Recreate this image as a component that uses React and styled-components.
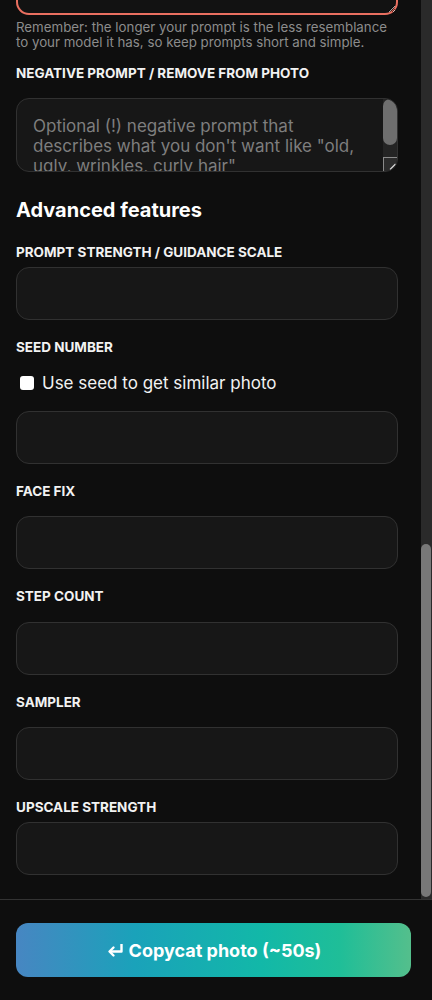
import React, { useLayoutEffect, useRef, useState } from "react";
import styled, { createGlobalStyle } from "styled-components";

// # GLOBAL
const GlobalStyle = createGlobalStyle`
	html, body {
		margin: 0;
		height: 100%;
		overflow: hidden;
		background: #0e0e0e;
	}
	* {
		box-sizing: border-box;
	}
	body {
		font-family: "Inter", "Noto Sans", sans-serif;
		color: #f2f2f2;
	}
`;

// # DATA
const fields = [
	{ id: "face", label: "FACE FIX", tall: true },
	{ id: "steps", label: "STEP COUNT", tall: true },
	{ id: "sampler", label: "SAMPLER", tall: true },
	{ id: "upscale", label: "UPSCALE STRENGTH" },
];

const ReturnIcon = () => (
	<svg width="18" height="16" viewBox="0 0 18 16" fill="none">
		<path
			d="M15.5 2 V9.5 H4"
			stroke="#fff"
			strokeWidth="2.4"
			strokeLinejoin="round"
		/>
		<path
			d="M7.5 5.5 L3.5 9.5 L7.5 13.5"
			stroke="#fff"
			strokeWidth="2.4"
			strokeLinecap="round"
			strokeLinejoin="round"
		/>
	</svg>
);

const Grip = () => (
	<svg width="12" height="12" viewBox="0 0 12 12">
		<path d="M10.5 5 L5 10.5 M10.5 8 L8 10.5" stroke="#d8d8d8" strokeWidth="1.2" />
	</svg>
);

// # MAIN COMP..
const App = () => {
	const scrollRef = useRef(null);
	const [thumb, setThumb] = useState({ top: 0, height: 0 });

	// # FUNCTIONS AND SIDE EFFECTS
	useLayoutEffect(() => {
		const el = scrollRef.current;
		if (!el) return;
		el.scrollTop = el.scrollHeight;
		const track = el.clientHeight - 4;
		const ratio = el.clientHeight / el.scrollHeight;
		setThumb({
			top: (el.scrollTop / el.scrollHeight) * track,
			height: ratio * track,
		});
	}, []);

	// # RETs
	return (
		<>
			<GlobalStyle />
			<Page>
				<Main>
					<ScrollArea ref={scrollRef}>
						<Form>
							{/* upper part of the form, scrolled out of view */}
							<Input readOnly />
							<Dropzone />
							<PhotoGrid>
								{Array.from({ length: 18 }).map((_, i) => (
									<Tile key={i} />
								))}
							</PhotoGrid>
							<PromptArea />
							<Hint>
								Remember: the longer your prompt is the less resemblance to
								your model it has, so keep prompts short and simple.
							</Hint>
							<Label $gap={15} $after={17}>
								NEGATIVE PROMPT / REMOVE FROM PHOTO
							</Label>
							<NegBox>
								<NegText placeholder='Optional (!) negative prompt that describes what you don&apos;t want like "old, ugly, wrinkles, curly hair"' />
								<NegScroll>
									<NegThumb />
									<NegTrack />
									<Resizer>
										<Grip />
									</Resizer>
								</NegScroll>
							</NegBox>

							<SubHeading>Advanced features</SubHeading>
							<Label $after={7}>PROMPT STRENGTH / GUIDANCE SCALE</Label>
							<Input readOnly />

							<Label $gap={19} $after={18}>
								SEED NUMBER
							</Label>
							<CheckRow>
								<Check type="checkbox" />
								Use seed to get similar photo
							</CheckRow>
							<Input readOnly />

							{fields.map(f => (
								<React.Fragment key={f.id}>
									<Label $gap={19} $after={f.tall ? 17.5 : 7}>
										{f.label}
									</Label>
									<Input readOnly />
								</React.Fragment>
							))}
						</Form>
					</ScrollArea>
					<ScrollTrack>
						<ScrollThumb
							style={{ marginTop: thumb.top, height: thumb.height }}
						/>
					</ScrollTrack>
				</Main>
				<BottomBar>
					<SubmitButton type="button">
						<ReturnIcon />
						Copycat photo (~50s)
					</SubmitButton>
				</BottomBar>
			</Page>
		</>
	);
};

// # STYLED COMPONENTS
const Page = styled.div`
	height: 100vh;
	display: flex;
	flex-direction: column;
	background: #0e0e0e;
`;

const Main = styled.div`
	flex: 1;
	min-height: 0;
	display: flex;
`;

const ScrollArea = styled.div`
	flex: 1;
	min-width: 0;
	overflow-y: scroll;
	scrollbar-width: none;
`;

const ScrollTrack = styled.div`
	flex: none;
	width: 11px;
	padding: 2px 1px 2px 0;
	background: #2a2a2a;
	display: flex;
	flex-direction: column;
`;

const ScrollThumb = styled.div`
	flex: none;
	width: 100%;
	border-radius: 5px;
	background: #787878;
`;

const Form = styled.div`
	display: flex;
	flex-direction: column;
	padding: 174px 23px 23.5px 16px;
`;

const SubHeading = styled.h2`
	margin: 26px 0 21.5px;
	font-size: 20px;
	line-height: 24px;
	font-weight: 700;
	color: #fff;
`;

const Label = styled.label`
	display: block;
	margin-top: ${p => p.$gap ?? 0}px;
	margin-bottom: ${p => p.$after ?? 17.5}px;
	font-size: 13.5px;
	line-height: 16px;
	font-weight: 700;
	color: #f2f2f2;
`;

const Input = styled.input`
	display: block;
	width: 100%;
	height: 53px;
	padding: 0 16px;
	border: 1px solid #313131;
	border-radius: 13px;
	background: #171717;
	color: #f2f2f2;
	font: inherit;
	outline: none;
`;

const Dropzone = styled.div`
	height: 204px;
	margin: 19px 0 16px;
	border: 1px dashed #3a3a3a;
	border-radius: 13px;
	background: #141414;
`;

const PhotoGrid = styled.div`
	display: grid;
	grid-template-columns: repeat(3, 1fr);
	gap: 8px;
	margin-bottom: 19px;
`;

const Tile = styled.div`
	aspect-ratio: 1;
	border-radius: 10px;
	background: #1c1c1c;
`;

const PromptArea = styled.textarea`
	display: block;
	width: 100%;
	height: 140px;
	padding: 16px;
	border: 2px solid #e96f60;
	border-radius: 13px;
	background: #121212;
	color: #f2f2f2;
	font: inherit;
	font-size: 17px;
	outline: none;
	resize: vertical;
`;

const Hint = styled.p`
	margin: 5px 0 0;
	font-size: 13.3px;
	line-height: 15px;
	color: #8c8c8c;
`;

const NegBox = styled.div`
	display: flex;
	height: 74px;
	border: 1px solid #313131;
	border-radius: 13px;
	background: #171717;
	overflow: hidden;
`;

const NegText = styled.textarea`
	flex: 1;
	min-width: 0;
	padding: 17px 16px 0;
	border: none;
	background: transparent;
	color: #f2f2f2;
	font-family: inherit;
	font-size: 17px;
	line-height: 20px;
	outline: none;
	resize: none;
	overflow: hidden;

	&::placeholder {
		color: #7e7e7e;
	}
`;

const NegScroll = styled.div`
	flex: none;
	width: 14px;
	display: flex;
	flex-direction: column;
	background: #242424;
`;

const NegThumb = styled.div`
	flex: none;
	height: 46px;
	border-radius: 7px;
	background: #6e6e6e;
`;

const NegTrack = styled.div`
	flex: 1;
`;

const Resizer = styled.div`
	flex: none;
	height: 14px;
	display: flex;
	align-items: flex-end;
	justify-content: flex-end;
	border-top: 1px solid #8a8a8a;
	border-left: 1px solid #8a8a8a;
	background: #2c2c2c;
`;

const CheckRow = styled.label`
	display: flex;
	align-items: center;
	gap: 8px;
	height: 20px;
	margin-bottom: 18px;
	font-size: 17px;
	color: #f2f2f2;
`;

const Check = styled.input`
	appearance: none;
	width: 14px;
	height: 14px;
	margin: 0 0 0 4px;
	border-radius: 3px;
	background: #fff;
`;

const BottomBar = styled.div`
	flex: none;
	border-top: 1px solid #333;
	padding: 23px 21px 23px 16px;
	background: #0e0e0e;
`;

const SubmitButton = styled.button`
	display: flex;
	align-items: center;
	justify-content: center;
	gap: 5px;
	width: 100%;
	height: 54px;
	border: none;
	border-radius: 12px;
	background: linear-gradient(
		90deg,
		#4786c2 0%,
		#1aa2ba 30%,
		#12b8a8 62%,
		#1fbe98 82%,
		#54bf8c 100%
	);
	color: #fff;
	font-family: inherit;
	font-size: 18px;
	font-weight: 700;
	cursor: pointer;
`;

export default App;
